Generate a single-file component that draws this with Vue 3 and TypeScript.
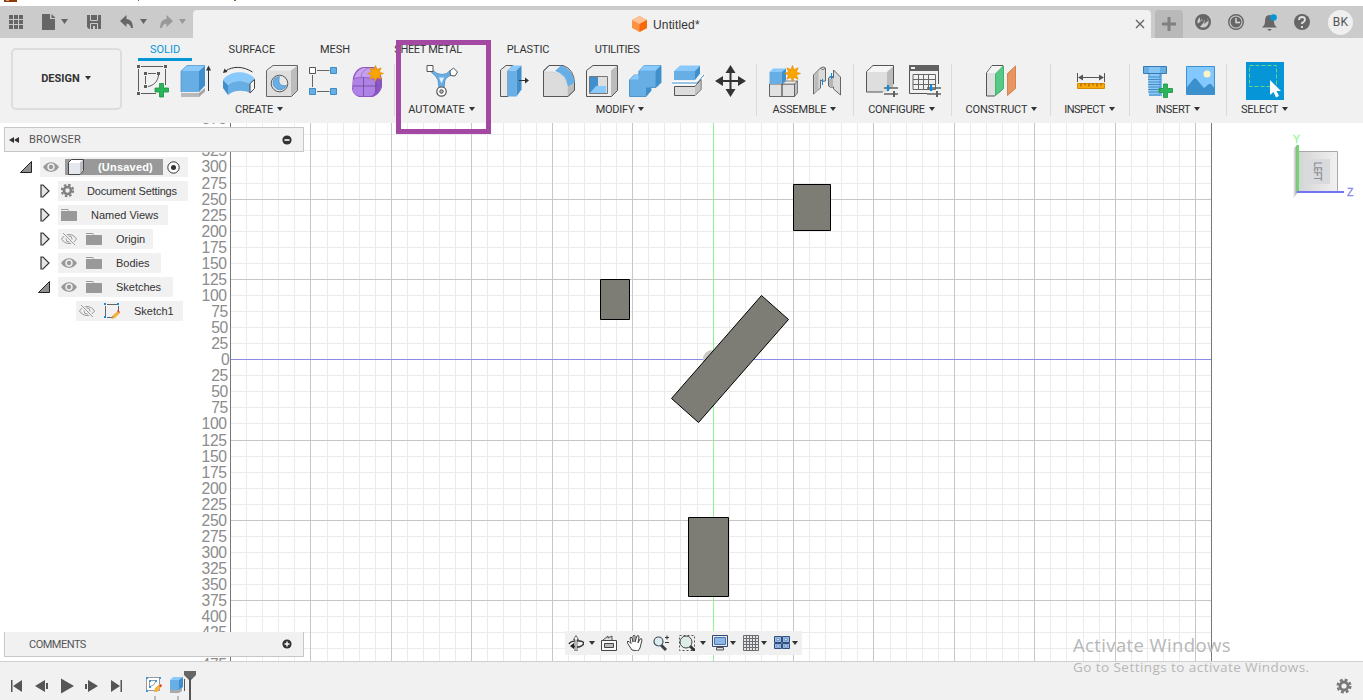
<script setup lang="ts">
interface Group { label: string; tools: string[]; width: number; pad: number; shift: number; track: number }
interface TreeRow { label: string; indent: number; width: number; textAt: number; open: boolean | null; eye: string; icon: string; bold?: boolean }

const tabs = [
  { label: 'SOLID', width: 54, left: 0, track: 0, active: true },
  { label: 'SURFACE', width: 60, left: 30, track: 0.1 },
  { label: 'MESH', width: 40, left: 33, track: 0 },
  { label: 'SHEET METAL', width: 80, left: 33, track: -0.35 },
  { label: 'PLASTIC', width: 60, left: 30, track: -0.1 },
  { label: 'UTILITIES', width: 60, left: 29, track: -0.35 },
]

const groups: Group[] = [
  { label: 'CREATE', tools: ['sketch', 'extrude', 'revolve', 'hole', 'pattern', 'form'], width: 270, pad: 12, shift: -1, track: -0.25 },
  { label: 'AUTOMATE', tools: ['automate'], width: 93, pad: 31, shift: 0, track: -0.1 },
  { label: 'MODIFY', tools: ['press', 'fillet', 'shell', 'combine', 'split', 'move'], width: 269, pad: 12, shift: -2.5, track: -0.25 },
  { label: 'ASSEMBLE', tools: ['component', 'joint'], width: 97, pad: 12, shift: -1, track: -0.15 },
  { label: 'CONFIGURE', tools: ['configure', 'table'], width: 98, pad: 12, shift: -1.5, track: -0.3 },
  { label: 'CONSTRUCT', tools: ['plane'], width: 99, pad: 33, shift: 0, track: -0.15 },
  { label: 'INSPECT', tools: ['measure'], width: 79, pad: 24, shift: -1, track: -0.5 },
  { label: 'INSERT', tools: ['bolt', 'image'], width: 97, pad: 13, shift: -0.5, track: -0.3 },
  { label: 'SELECT', tools: ['select'], width: 76, pad: 19, shift: -0.5, track: -0.25 },
]

const slider = '<path d="M18 23h14M18 29h14" stroke="#616161" stroke-width="1.6"/><path d="M22 20v6" stroke="#0a8ce6" stroke-width="2.2"/><path d="M28 26v6" stroke="#616161" stroke-width="2"/>'
const star = '<path d="M0-8L1.6-3.9 5.7-5.7 3.9-1.6 8 0 3.9 1.6 5.7 5.7 1.6 3.9 0 8-1.6 3.9-5.7 5.7-3.9 1.6-8 0-3.9-1.6-5.7-5.7-1.6-3.9Z" fill="#f9a500" stroke="#e08a00" stroke-width=".6"/>'
const plus = '<path d="M22.5 18.5h4v4.500h5v4h-5v5h-4v-5h-4.500v-4h4.500Z" fill="#2bb45a" stroke="#149440" stroke-width=".8"/>'

const icons: Record<string, string> = {
  sketch: `<path d="M4 1.5h22M1.5 4v22M28.5 4v16M4 28.5h15M11 8.500h8M8.500 11v8M21.500 10C21 16 17 20.500 11 21.500" fill="none" stroke="#5c5c5c"/><path d="M0 0h3v3H0zM27 0h3v3h-3zM0 27h3v3H0zM7 7h3v3H7zM20 7h3v3h-3zM7 20h3v3H7z" fill="#5c5c5c"/>${plus}`,
  extrude: '<path d="M1 28h18l6-5v3.500L19 32H1z" fill="#a4a4a4"/><path d="M1 28h18v4H1z" fill="#b9b9b9"/><path d="M1 6h18v21H1z" fill="#67aee5"/><path d="M1 6L7 .5h18L19 6z" fill="#8ac9fb"/><path d="M19 6L25 .5v20L19 27z" fill="#3f8fcd"/><path d="M1 27V6L7 .5h18" stroke="#478ec9" stroke-width=".7" fill="none"/><path d="M28.500 2v24" stroke="#333"/><path d="M28.500 .5l2.500 5h-5z" fill="#333"/>',
  revolve: '<path d="M2.500 6C10 1 20 1 29.500 7" fill="none" stroke="#333"/><path d="M0 8l1.500-4.500 3 3.500z" fill="#333"/><path d="M0 15C7 5 25 5 32 14l-5 5C22 15 10 15 5 20z" fill="#8ac9fb"/><path d="M5 20C10 15 22 15 27 19v9C21 24.500 10 25 5 30z" fill="#67aee5"/><path d="M0 15l5 5v10l-5-7z" fill="#3f8fcd"/><path d="M27 18.500l4.500-4v9L27 28z" fill="#f7f7f7" stroke="#444"/>',
  hole: '<path d="M.5 5.500L7 .5h24.500L25.500 5.500z" fill="#eee"/><path d="M25 5.500L31.500 .5v25L25 31.500z" fill="#bcbcbc"/><path d="M.5 5.500H25v26H.5z" fill="#dedede"/><path d="M.5 5.500L7 .5h24.500v25L25.500 31.500H.5z" fill="none" stroke="#666"/><circle cx="13.500" cy="18.500" r="8.300" fill="#e7e7e7" stroke="#555"/><path d="M8.500 13.500A7 7 0 1 0 20.500 20.500C13 22 12 16 13.500 11.700A7 7 0 0 0 8.500 13.500" fill="#67aee5" stroke="#488ac0" stroke-width=".7"/>',
  pattern: '<path d="M8 5.500h12.500M8 26.500h12.500M3.500 10v12" stroke="#666"/><path d="M.5 2.500h6v6h-6z" fill="white" stroke="#555"/><path d="M21.500 2.500h6v6h-6zM.5 23.500h6v6h-6zM21.500 23.500h6v6h-6z" fill="#67aee5" stroke="#3d8dc9"/>',
  form: `<path d="M1 12Q4 3 11 2h12Q27 3 30 14v8Q28 29 21 32H7Q1 30 0 24z" fill="#8c57c5"/><path d="M2 14Q4 5 11 3h10Q26 4 28 10l-6 5z" fill="#c7a0f0"/><path d="M1 15Q4 11 12 12 21 11 23 15v11Q22 31 18 31H8Q1 30 1 25z" fill="#af82e8"/><path d="M1 21h23M11.500 12v19M24 14v13" fill="none" stroke="#6e4a94" stroke-width=".8"/><path d="M1.500 14Q11 10 23 15M24 21l6-3M9 12Q10 5 17 3" fill="none" stroke="#7b55a4" stroke-width=".5"/><g transform="translate(23.500 8.500)">${star}</g>`,
  automate: '<path d="M6 5Q11 9.500 16 9.500 21 9.500 24 5.500l1.500 4.500Q20 12 19 15l-1 8h-5l-1-8Q10.500 11 5.500 7.500z" fill="#67aee5" stroke="#3883ba" stroke-width=".7"/><path d="M13 12.500h5l-2.500 6z" fill="#e6eff5"/><path d="M1 .5h6v6H1zM27.500 3l4 4-2.500 4-4.500-.5-.5-4.500z" fill="#fff" stroke="#555"/><circle cx="15.500" cy="26.500" r="4.700" fill="#fff" stroke="#555" stroke-width="1.200"/><circle cx="15.500" cy="26.500" r="1.800" fill="#aaa" stroke="#555"/>',
  press: '<path d="M.5 5L6 .5h7L8 6v25.500H.5z" fill="#e7e7e7" stroke="#555"/><path d="M7.500 5.500h9v26h-9z" fill="#67aee5"/><path d="M7.500 5.500l5-5h9l-5 5z" fill="#8ac9fb"/><path d="M16.500 5.500l5-5v24l-5 7z" fill="#3f8fcd"/><path d="M19 15.500h8" stroke="#333"/><path d="M25 12.500l4 3-4 3z" fill="#333"/>',
  fillet: '<path d="M.5 6L6 .5h14Q31 4 31.500 18v7L25 31.500H.5z" fill="#eee" stroke="#555"/><path d="M.5 7h9Q22 8 24.500 23v8.500H.5z" fill="#dcdcdc" stroke="#ccc" stroke-width=".7"/><path d="M12 6L18 .5Q30 4 31.500 18L25 22Q23 9 12 6" fill="#67aee5"/><path d="M25 22l6.500-4v7L25 31.500z" fill="#bdbdbd"/><path d="M.5 31.500V6L6 .5h11M.5 31.500H25l6.500-6.500V18" fill="none" stroke="#555"/>',
  shell: '<path d="M.5 5.500L7 .5h24.500L25.500 5.500z" fill="#eee"/><path d="M25 5.500L31.500 .5v25L25 31.500z" fill="#bcbcbc"/><path d="M.5 5.500H25v26H.5z" fill="#eee"/><path d="M.5 5.500L7 .5h24.500v25L25.500 31.500H.5z" fill="none" stroke="#555"/><path d="M3.500 11.500h18v17h-18z" fill="#dfdfdf" stroke="#777"/><path d="M4 12h8v9l-8 7z" fill="#3f8fcd"/><path d="M4 28l6-7h10v7z" fill="#8ac9fb"/>',
  combine: '<path d="M.5 15L5 10h5V6L15 .5h17v17l-5 5h-5v3l-5 6H.5z" fill="#67aee5" stroke="#3887c3" stroke-width=".8"/><path d="M.5 15L5 10h5V6L15 .5h17l-5.500 5.500H10v9z" fill="#8ac9fb"/><path d="M26.500 6L32 .5v17l-5.500 5zM17 22.500h5v3l-5 6z" fill="#3f8fcd"/><path d="M.5 15H10V6h16.500" stroke="#67aee5" fill="none"/>',
  split: '<path d="M2 6L8 .5h20L23 6z" fill="#8ac9fb"/><path d="M2 6h21v9H2z" fill="#67aee5"/><path d="M23 6L28 .5v8L23 15z" fill="#3f8fcd"/><path d="M0 18h25l7-8" fill="none" stroke="#fff" stroke-width="4"/><path d="M0 18h25l7-8" fill="none" stroke="#398bc8"/><path d="M2.500 21.500H23l6-7v10L23 30.500H2.500z" fill="#ddd" stroke="#555"/><path d="M23 22l5.500-6v8L23 30z" fill="#c2c2c2"/>',
  move: '<path d="M15.500 3v26M3 16h26" stroke="#333" stroke-width="2"/><path d="M15.500 0l5 8h-10zM15.500 32l5-8h-10zM0 16l8-5v10zM31 16l-8-5v10z" fill="#333"/>',
  component: `<path d="M.5 19h12.500v12.500H.5zM13 19h12.500v12.500H13z" fill="#e1e1e1" stroke="#666"/><path d="M13 19l4-3h12l-3 3z" fill="#eee" stroke="#555" stroke-width=".7"/><path d="M25.500 19l3-3v12l-3 3.500z" fill="#bcbcbc" stroke="#555" stroke-width=".7"/><path d="M.5 7h12v12H.5z" fill="#67aee5"/><path d="M.5 7L4 3.500h13L12.500 7z" fill="#8ac9fb"/><path d="M12.500 7L17 3.500v12L12.500 19z" fill="#3f8fcd"/><g transform="translate(23.500 8.500)">${star}</g>`,
  joint: '<path d="M1.500 10L8.500 3q3-2 5 0v13q-3 1-5-1v8l-7 6z" fill="#dadada" stroke="#666"/><path d="M2.500 10.500l4-4.500v19l-4 3.500z" fill="#bbb"/><path d="M16.500 13q2-2 5 0V5l7 7v18l-7-6v-2q-3 1-5-1z" fill="#dadada" stroke="#666"/><path d="M17 13.500q2 1 4 0v8q-2 .5-4-1z" fill="#b5b5b5"/><path d="M8.500 3.500q2 2 5 0" fill="#fff" stroke="#666"/><path d="M10.500 14v6M19.500 8v6M17.500 11.500h4" stroke="#0a8ce6"/>',
  configure: `<path d="M.5 6L7 .5h21v20L22 27H.5z" fill="#f5f5f5"/><path d="M.5 7H21v20H.5z" fill="#dedede"/><path d="M21 7l6.500-6v20L21 27z" fill="#bbb"/><path d="M27.500 19V.5H7L.5 6.500V27H17" fill="none" stroke="#555"/>${slider}`,
  table: `<path d="M0 0h30v6H0z" fill="#616161"/><path d="M.5 6v22.500H18M29.500 6v13" stroke="#555" fill="none"/><path d="M2 2h4v2H2z" fill="#eee"/><path d="M4 9.500h22.500v15H4zM4 14.500h22.500M4 19.500h22.500M9.500 10v14M14.500 10v14M19.500 10v14" fill="none" stroke="#666"/>${slider}`,
  plane: '<path d="M1.500 8L7 .5h11V24l-8.500 7H1.500z" fill="#e0e0e0" stroke="#555"/><path d="M2 8h8L17 1H7z" fill="#f4f4f4"/><path d="M10.500 9l8-8v22.500l-8 7z" fill="#57c986" stroke="#43b372"/><path d="M22.500 8.500l8-7.500v22.500l-8 7z" fill="#e79662" stroke="#d7834c"/>',
  measure: '<path d="M2.500 8v9M29.500 8v9M4 12.500h24" stroke="#555"/><path d="M3 12.500l5-3v6zM29 12.500l-5-3v6z" fill="#555"/><path d="M2.500 18.500h27v5h-27z" fill="#fba80a" stroke="#d38a07"/><path d="M6 18.500v3M10 18.500v2M14 18.500v3M18 18.500v2M22 18.500v3M26 18.500v2" stroke="#7c5511"/>',
  bolt: `<path d="M.5 1.500h23v7H.5z" fill="#67aee5" stroke="#347ab3"/><path d="M6 2h11v6H6z" fill="#86c4f4"/><path d="M6 9h12v2H6zM5 11h14v20H6z" fill="#8ac9fb"/><path d="M6 9v2M18 9v2M5 12h13M5 14.500h13M5 17h13M5 19.500h13M5 22h13M5 24.500h13M5 27h13M6 30h11" stroke="#4689bb"/><path d="M16 9h2.500v22H16z" fill="#4a96d2" opacity=".5"/><g transform="translate(-2 .5)">${plus}</g>`,
  image: '<path d="M.5 1.500h28v28H.5z" fill="#83c9ff" stroke="#3f91cd"/><circle cx="21" cy="9" r="3.500" fill="#fff4c6"/><path d="M1 22L8 13.500h2L18 23l5-4h2l4 5v5.500H1z" fill="#3b91cd"/>',
  select: '<path d="M0 0h38v38H0z" fill="#0696d7"/><path d="M3.500 3.500h27v21h-27z" fill="none" stroke="#67d582" stroke-dasharray="4 2"/><path d="M24 18v15l3.500-3 2.500 5.500 3-1.500-2.500-5h4.500z" fill="#fff"/>',
}

const treeIcons: Record<string, string> = {
  eye: '<path d="M0 8C4 1.500 12 1.500 16 8 12 14.500 4 14.500 0 8z" fill="#999"/><circle cx="8" cy="8" r="3.700" fill="#eee"/><circle cx="8" cy="8" r="2.200" fill="#999"/>',
  off: '<path d="M.5 8C4 2 12 2 15.500 8 12 14 4 14 .5 8z" fill="none" stroke="#999"/><circle cx="8" cy="8" r="3" fill="none" stroke="#999"/><path d="M2 2l12 12" stroke="#f1f1f1" stroke-width="3"/><path d="M2 2l12 12" stroke="#999"/>',
  folder: '<path d="M0 2h7l1 2h8v10H0z" fill="#999"/><path d="M0 3.500h7" stroke="#f1f1f1"/>',
  gear: '<g fill="none" stroke="#808080"><circle cx="6.500" cy="7.500" r="3.500" stroke-width="2.600"/><circle cx="6.500" cy="7.500" r="5.700" stroke-width="2" stroke-dasharray="2.500 1.976"/></g>',
  cube: '<path d="M.5 3.500l3-3h12v11l-3.500 4H.5z" fill="#fff" stroke="#444"/><path d="M12 3.500L15 1v10l-3 4z" fill="#bbbec5"/><path d="M1 4h11v11H1z" fill="#e4e7ed"/>',
  sk: '<path d="M3 1.500h10M1.500 3v10M3 14.500h5M14.500 3v5" stroke="#666"/><path d="M0 0h2v2H0zM13 0h2v2h-2zM0 13h2v2H0zM8 13h2v2H8z" fill="#0a8ce6"/><path d="M8 16l1-4 5-4 2 2-5 5z" fill="#f7b13b"/><path d="M13 8l1-1 2 2-1 1z" fill="#e43e3e"/>',
}

const rows: TreeRow[] = [
  { label: '(Unsaved)', indent: 40, width: 148, textAt: 98, open: true, eye: 'eye', icon: 'cube', bold: true },
  { label: 'Document Settings', indent: 58, width: 130, textAt: 87, open: false, eye: '', icon: 'gear' },
  { label: 'Named Views', indent: 58, width: 110, textAt: 91, open: false, eye: '', icon: 'folder' },
  { label: 'Origin', indent: 58, width: 95, textAt: 116, open: false, eye: 'off', icon: 'folder' },
  { label: 'Bodies', indent: 58, width: 103, textAt: 116, open: false, eye: 'eye', icon: 'folder' },
  { label: 'Sketches', indent: 58, width: 115, textAt: 116, open: true, eye: 'eye', icon: 'folder' },
  { label: 'Sketch1', indent: 76, width: 107, textAt: 134, open: null, eye: 'off', icon: 'sk' },
]

const step = 16.085
const top = 123
const columns = Array.from({ length: 62 }, (_, k) => k - 30).map(i => ({ i, at: Math.floor(713.1 + i * step) + 0.5 }))
const lines = Array.from({ length: 35 }, (_, k) => k - 15).map(i => ({ i, at: Math.floor(359.7 + i * 16.06) + 0.5 - top }))
const labelEnd = (i: number) => (i === 0 ? 229.5 : Math.abs(i) < 4 ? 228 : 226.8)
const lineColor = (i: number, axis: string) => (i === 0 ? axis : i % 5 === 0 ? '#c6c6c6' : '#ebebeb')

const nav: { id: string; menu: boolean; before: number; gap: number; svg: string }[] = [
  { id: 'orbit', menu: true, before: 5, gap: 6, svg: '<path d="M1 9c2-4 13-4 15-1-1 4-7 5-11 3" fill="none" stroke="#333" stroke-width="1.500"/><path d="M7 4.500H5.500l2.500-4 2.500 4H9V16H7z" fill="#fff" stroke="#444" stroke-width=".8"/><path d="M2 11l4-3v6z" fill="#222"/>' },
  { id: 'look', menu: false, before: 0, gap: 10, svg: '<path d="M2 5l5-4v2l4-2v4" fill="#ddd" stroke="#555"/><path d="M.5 5.500h15v10H.5z" fill="#f9f9f9" stroke="#454545"/><path d="M3.500 8.500h9v4h-9z" fill="#b8bbc0" stroke="#444"/>' },
  { id: 'pan', menu: false, before: 0, gap: 10, svg: '<path d="M5 15L1 9 0 6.500q2-1 4 2L3 3q1-2 2 0l1 4V1q1.500-2 2 0v6L10 1q2-1 2 1l-1 6 2-4q2-1 2 1l-2 8-2 3z" fill="#fff" stroke="#454545"/>' },
  { id: 'zoom', menu: false, before: 0, gap: 10, svg: '<path d="M8 10l5 5" stroke="#3c434c" stroke-width="3"/><circle cx="5.500" cy="6.500" r="4.500" fill="#dcecf1" stroke="#3d4d57" stroke-width="1.200"/><path d="M12 2.500h4M14 .5v4M12 7.500h4" stroke="#333"/>' },
  { id: 'fit', menu: true, before: 5, gap: 6, svg: '<path d="M.5 .5h15v15H.5z" fill="none" stroke="#555" stroke-dasharray="2 2"/><path d="M11 11l5 5" stroke="#333" stroke-width="3"/><circle cx="7" cy="7" r="6" fill="#dcece9" stroke="#454545"/>' },
  { id: 'display', menu: true, before: 2, gap: 7, svg: '<path d="M.5 .5h15v11H.5z" fill="#eee" stroke="#334568"/><path d="M2.500 2.500h11v7h-11z" fill="#8eb6e1" stroke="#4776b4"/><path d="M4.500 12.500h7v2.500h-7z" fill="#ddd" stroke="#555"/>' },
  { id: 'snap', menu: true, before: 2, gap: 7, svg: '<path d="M.5 .5h15v15H.5zM3.500 0v16M6.500 0v16M9.500 0v16M12.500 0v16M0 3.500h16M0 6.500h16M0 9.500h16M0 12.500h16" fill="#e5e5e5" stroke="#6a6d72"/>' },
  { id: 'views', menu: true, before: 2, gap: 0, svg: '<path d="M.5 1.500h7v6h-7zM8.500 1.500h7v6h-7zM.5 8.500h7v5h-7zM8.500 8.500h7v5h-7z" fill="#9ab9e0" stroke="#304d80"/><path d="M2.500 3.500h3v2h-3zM10.500 3.500h3v2h-3zM2.500 10h3v2h-3zM10.500 10h3v2h-3z" fill="#c5d9ef" stroke="#5b83ba" stroke-width=".6"/>' },
]

const play = [
  { id: 'start', d: 'M1 2h1.500v12H1zM12 2v12L3 8z' },
  { id: 'back', d: 'M10 2v12L0 8zM11 5h2v6h-2z' },
  { id: 'play', d: 'M1 .5l13 7.500-13 7.500z' },
  { id: 'forward', d: 'M0 6h2v5H0zM3 2l10 6-10 6z' },
  { id: 'end', d: 'M1 2l9 6-9 6zM10.500 2H12v12h-1.500z' },
]
</script>

<template>
  <div class="app">
    <div class="caption">
      <svg width="260" height="6"><path d="M4 0h13v2H4z" fill="#8b3a0c" /><path d="M6 0h3v1H6z" fill="#d9a27e" /><path d="M138 0h1v1h-1z" fill="#2a69a8" /><path d="M234 0h2v1h-2z" fill="#80602f" /></svg>
    </div>

    <header class="topbar">
      <div class="quick">
        <svg width="193" height="32" fill="#666">
          <path d="M9 9h4v4H9zM14 9h4v4h-4zM19 9h4v4h-4zM9 14h4v4H9zM14 14h4v4h-4zM19 14h4v4h-4zM9 19h4v4H9zM14 19h4v4h-4zM19 19h4v4h-4z" />
          <path d="M42 8h8v5h5v11H42zM51.500 8l4 4h-4zM61 13h7l-3.500 5zM140 13h7l-3.500 5z" />
          <path d="M87 9h14v14H89l-2-2z" /><path d="M90.500 9v5.500h7V9M90.500 23v-5.500h7V23" fill="none" stroke="#cbcbcb" /><path d="M93 20h2v3h-2z" fill="#cbcbcb" />
          <path d="M120 15l6.500-6v4q6.500.5 6.500 9h-2q-.5-4-4.500-4.500V21z" />
          <g opacity=".5"><path d="M173 15l-6.500-6v4q-6.500.5-6.500 9h2q.5-4 4.500-4.500V21zM179 13h7l-3.500 5z" /></g>
        </svg>
      </div>
      <div class="doctab">
        <div class="doctitle">
          <svg width="15" height="16" viewBox="0 0 15 16"><path d="M7.500 0L15 4v8l-7.500 4L0 12V4z" fill="#ff9142" /><path d="M7.500 0L15 4 7.500 8 0 4z" fill="#ffc194" /><path d="M15 4v8l-7.500 4V8z" fill="#f96a08" /></svg>
          <span>Untitled*</span>
        </div>
        <svg class="close" width="10" height="10"><path d="M1 1l8 8M9 1L1 9" stroke="#666" stroke-width="1.400" /></svg>
      </div>
      <div class="newtab"><svg width="14" height="14"><path d="M5.500 0h3v5.500H14v3H8.500V14h-3V8.500H0v-3h5.500z" fill="#808080" /></svg></div>
      <div class="account">
        <svg width="126" height="28" fill="#666">
          <circle cx="8" cy="12" r="6.800" fill="none" stroke="#666" stroke-width="2.400" /><path d="M1.500 14q3-1 5.500-4l2 2-5 6z" /><path d="M5 7q3-3 7-1l1 5-4 3 1-4-2 2-1-3-2 2z" />
          <circle cx="41" cy="12" r="7.300" fill="none" stroke="#666" stroke-width="1.400" /><circle cx="41" cy="12" r="5.500" /><path d="M41 8v4.500h4" stroke="#ddd" stroke-width="1.400" fill="none" />
          <path d="M67 17.500q3.500-2.500 3-6.500 0-6 4.500-6t4.500 6q-.5 4 3 6.500zM72 19h5l-2.500 2z" /><circle cx="78.500" cy="7.500" r="3.300" fill="#0696d7" />
          <circle cx="107" cy="12" r="8" /><path d="M104 10q0-3 3-3t3 2.500q0 2-3 3.500v1M107 16v2" stroke="#e0e0e0" stroke-width="1.800" fill="none" />
        </svg>
        <div class="avatar">BK</div>
      </div>
    </header>

    <section class="ribbon">
      <button class="design">DESIGN<i class="caret"></i></button>
      <div class="ribbon-main">
        <nav class="tabs">
          <div v-for="t in tabs" :key="t.label" class="tab" :class="{ active: t.active }" :style="{ width: t.width + 'px', marginLeft: t.left + 'px', letterSpacing: t.track + 'px' }">{{ t.label }}</div>
        </nav>
        <div class="groups">
          <div v-for="g in groups" :key="g.label" class="group" :style="{ width: g.width + 'px' }">
            <div class="tools" :style="{ paddingLeft: g.pad + 'px' }">
              <svg v-for="t in g.tools" :key="t" :class="['tool', { big: t === 'select' }]" fill="none" v-html="icons[t]"></svg>
            </div>
            <div class="label" :style="{ paddingRight: -g.shift * 2 + 'px', letterSpacing: g.track + 'px' }">{{ g.label }}<i class="caret"></i></div>
          </div>
        </div>
      </div>
    </section>

    <main class="canvas">
      <svg class="grid" width="1363" height="538">
        <g v-for="c in columns" :key="'c' + c.i"><path v-if="c.i % 5" :d="`M${c.at} 0V538`" stroke="#ebebeb" /></g>
        <g v-for="l in lines" :key="'l' + l.i"><path v-if="l.i % 5" :d="`M231 ${l.at}H1211`" stroke="#ebebeb" /></g>
        <g v-for="c in columns" :key="'m' + c.i"><path v-if="c.i % 5 === 0" :d="`M${c.at} 0V538`" :stroke="lineColor(c.i, '#8ff58f')" /></g>
        <g v-for="l in lines" :key="'n' + l.i"><path v-if="l.i % 5 === 0" :d="`M231 ${l.at}H1211`" :stroke="lineColor(l.i, '#8c8ce8')" /></g>
        <path d="M230.500 0V538M1211.500 0V538" stroke="#777" />
        <text v-for="l in lines" :key="'t' + l.i" class="scale" :x="labelEnd(l.i)" :y="l.at + 5.4" text-anchor="end">{{ Math.abs(l.i * 25) }}</text>
        <circle cx="712" cy="236" r="9" fill="#c8c8c8" />
        <g fill="#7e7d75" stroke="#000">
          <path d="M600.500 156.500h29v40h-29zM793.500 61.500h37v46h-37zM688.500 394.500h40v79h-40z" />
          <path d="M761.500 172.500L788.500 196.500 698.500 299.500 671.500 275.500z" />
        </g>
      </svg>

      <svg class="cube" width="73" height="80">
        <defs>
          <linearGradient id="face"><stop offset="0" stop-color="#d4d4d4" /><stop offset="1" stop-color="#f1f1f1" /></linearGradient>
          <linearGradient id="shade"><stop offset="0" stop-color="#fff" /><stop offset="1" stop-color="#9b9b9b" /></linearGradient>
        </defs>
        <path d="M3 19l4-4v48l-4 6z" fill="url(#shade)" />
        <path d="M8.500 21.500h39v40h-39z" fill="url(#face)" stroke="#a9a9a9" />
        <path d="M15 29h25v25H15z" fill="#d9dade" />
        <path d="M8 15v47" stroke="#5ce65c" stroke-width="2" /><path d="M7 62h47" stroke="#7373f5" stroke-width="2" />
        <text x="3" y="13" class="axis" fill="#99f599" stroke="#99f599" stroke-width=".3">Y</text><text x="57" y="66" class="axis" fill="#8484f2" stroke="#8484f2" stroke-width=".3">Z</text>
        <text class="face" transform="translate(24 32) rotate(90)" textLength="19" lengthAdjust="spacingAndGlyphs">LEFT</text>
      </svg>

      <div class="panel browser">
        <svg width="10" height="8"><path d="M5 1v6L0 4zM10 1v6L5 4z" fill="#333" /></svg>
        <span>BROWSER</span>
        <svg class="round" width="10" height="10"><circle cx="5" cy="5" r="4.600" fill="#333" /><path d="M2.500 5h5" stroke="#fff" stroke-width="1.600" /></svg>
      </div>

      <div class="tree">
        <div v-for="r in rows" :key="r.label" class="row">
          <div class="twisty" :style="{ width: r.indent + 'px' }">
            <svg v-if="r.open === true" width="12" height="12"><path d="M11.500 .5v11H.5z" fill="#909090" stroke="#222" /></svg>
            <svg v-else-if="r.open === false" width="10" height="14"><path d="M1 1h2l6 6-6 6H1z" fill="#e5e5e5" stroke="#333" stroke-width="1.200" /></svg>
          </div>
          <div class="item" :class="{ root: r.bold }" :style="{ width: r.width + 'px' }">
            <svg v-if="r.eye" class="eye" width="16" height="16" v-html="treeIcons[r.eye]"></svg>
            <div v-if="r.bold" class="selected"><svg width="16" height="16" v-html="treeIcons.cube"></svg><b>(Unsaved)</b></div>
            <svg v-if="r.bold" width="13" height="13"><circle cx="6.500" cy="6.500" r="5.700" fill="#fff" stroke="#333" /><circle cx="6.500" cy="6.500" r="2.500" fill="#333" /></svg>
            <template v-else>
              <div class="glyph" :style="{ width: r.textAt - r.indent - (r.eye ? 28 : 3) + 'px' }"><svg width="16" height="16" v-html="treeIcons[r.icon]"></svg></div>
              <span :class="{ wide: r.label === 'Document Settings' }">{{ r.label }}</span>
            </template>
          </div>
        </div>
      </div>

      <div class="panel comments">
        <span>COMMENTS</span>
        <svg class="round" width="10" height="10"><circle cx="5" cy="5" r="4.600" fill="#333" /><path d="M2.500 5h5M5 2.500v5" stroke="#fff" stroke-width="1.400" /></svg>
      </div>

      <div class="navbar">
        <div v-for="n in nav" :key="n.id" class="navitem" :style="{ marginRight: n.gap + 'px' }">
          <svg width="16" height="16" fill="none" v-html="n.svg"></svg><i v-if="n.menu" class="caret" :style="{ marginLeft: n.before + 'px' }"></i>
        </div>
      </div>
    </main>

    <footer class="timeline">
      <div class="playback"><svg v-for="p in play" :key="p.id" width="14" height="16"><path :d="p.d" fill="#555" /></svg></div>
      <div class="features">
        <svg width="66" height="38">
          <g transform="translate(1 15)"><path d="M.5 .5h13v13H.5z" fill="#fff" stroke="#999" /><path d="M3.500 3.500h6q0 5-6 6z" fill="none" stroke="#999" /><path d="M0 0h2v2H0zM13 0h2v2h-2zM0 13h2v2H0zM3 3h2v2H3zM9 3h2v2H9zM3 9h2v2H3z" fill="#3c99dc" /><path d="M8 15l1-4 5-4 2 2-5 6z" fill="#f5b23e" /><path d="M13 9l2-2 1 2-2 1z" fill="#e33" /></g>
          <path d="M25 28h9l3-2v3l-3 2h-9z" fill="#aaa" /><path d="M25 18l3-3h10l-3 3z" fill="#8ac9fb" /><path d="M25 18h9v10h-9z" fill="#67aee5" /><path d="M34 18l4-3v10l-4 3z" fill="#3f8fcd" /><path d="M39.500 17v12" stroke="#555" />
          <path d="M10 34v4M33 34v4" stroke="#bbb" stroke-width="2" />
          <path d="M39 9h12v4l-5 5h-2l-5-5z" fill="#666" /><path d="M45 16v22" stroke="#555" stroke-width="2" />
        </svg>
      </div>
      <svg class="settings" width="16" height="16"><g fill="none" stroke="#777"><circle cx="8" cy="8" r="4" stroke-width="2.800" /><circle cx="8" cy="8" r="6.300" stroke-width="2.400" stroke-dasharray="2.800 2.148" /></g></svg>
    </footer>

    <div class="highlight"></div>
    <div class="watermark"><div class="w1">Activate Windows</div><div class="w2">Go to Settings to activate Windows.</div></div>
  </div>
</template>

<style>
body { margin: 0; overflow: hidden; }
</style>

<style scoped>
.app { position: relative; width: 1363px; height: 700px; display: flex; flex-direction: column; background: #fff; overflow: hidden; font-family: Roboto, "Liberation Sans", sans-serif; color: #333; }
svg { display: block; flex: none; }
.caption { height: 6px; }
.topbar { height: 32px; display: flex; align-items: flex-end; background: #cbcbcb; }
.quick { width: 193px; height: 32px; }
.doctab { width: 958px; height: 28px; background: #f1f1f1; border-radius: 4px 4px 0 0; display: flex; align-items: center; justify-content: space-between; box-sizing: border-box; padding: 0 6px 0 439px; }
.doctitle { display: flex; align-items: center; gap: 6px; font: 12px "Liberation Sans", sans-serif; letter-spacing: .15px; }
.doctitle span { padding-top: 2px; }
.newtab { width: 28px; height: 28px; margin-left: 4px; background: #b9b9b9; border-radius: 4px 4px 0 0; display: flex; align-items: center; justify-content: center; }
.account { display: flex; margin-left: 12px; height: 28px; }
.avatar { width: 25px; height: 25px; margin-left: 7px; border-radius: 50%; background: #efefef; font-size: 12px; line-height: 25px; text-align: center; color: #555; letter-spacing: .3px; }
.ribbon { height: 85px; flex: none; background: #f1f1f1; display: flex; }
.design { width: 111px; height: 62px; margin: 10px 2px 0 11px; border: 2px solid #ddd; border-radius: 5px; background: #f1f1f1; font: bold 11px Roboto, sans-serif; color: #333; padding: 0 1px 2px 0; display: flex; align-items: center; justify-content: center; }
.caret { display: inline-block; width: 0; height: 0; border: 3px solid transparent; border-top: 4px solid #333; border-bottom: 0; margin-left: 4px; }
.design .caret { margin-left: 5px; }
.ribbon-main { flex: 1; }
.tabs { height: 23px; display: flex; padding-left: 14px; }
.tab { height: 20px; line-height: 24px; font-size: 11px; text-align: center; white-space: nowrap; border-bottom: 3px solid transparent; }
.tab.active { color: #0696d7; border-bottom-color: #0696d7; }
.groups { display: flex; padding-left: 1px; }
.group { position: relative; height: 59px; box-sizing: border-box; }
.group::after { content: ""; position: absolute; right: 0; top: 3px; width: 1px; height: 52px; background: #dadada; }
.group:last-child::after { display: none; }
.tools { display: flex; gap: 11px; height: 42px; box-sizing: border-box; padding-top: 4px; }
.tool { width: 32px; height: 32px; overflow: visible; }
.tool.big { width: 38px; height: 38px; margin-top: -3px; }
.label { height: 14px; line-height: 14px; font-size: 11px; text-align: center; white-space: nowrap; }
.label .caret { vertical-align: 2px; }
.canvas { position: relative; height: 538px; flex: none; overflow: hidden; }
.grid { position: absolute; left: 0; top: 0; }
.scale { font: 15.700px "Liberation Sans", sans-serif; letter-spacing: -.3px; fill: #8c8c8c; }
.cube { position: absolute; left: 1290px; top: 7px; }
.axis { font: 10.500px "Liberation Sans", sans-serif; }
.face { font: bold 10px "Liberation Sans", sans-serif; fill: #8e9096; }
.panel { position: absolute; left: 4px; width: 300px; height: 25px; box-sizing: border-box; border: 1px solid #c7c7c7; background: #f1f1f1; display: flex; align-items: center; font-size: 11px; color: #555; }
.browser { top: 4px; padding-left: 4px; }
.browser span { margin-left: 10px; letter-spacing: .2px; }
.comments { top: 509px; border-top: 0; padding-left: 24px; }
.comments span { letter-spacing: -.5px; }
.round { margin-left: auto; margin-right: 11px; }
.tree { position: absolute; left: 0; top: 34px; display: flex; flex-direction: column; gap: 4px; font: 11px "Liberation Sans", sans-serif; }
.row { height: 20px; display: flex; }
.twisty { display: flex; align-items: center; justify-content: flex-end; box-sizing: border-box; padding-right: 8px; }
.item { display: flex; align-items: center; background: #f1f1f1; box-sizing: border-box; padding-left: 3px; white-space: nowrap; letter-spacing: -.02px; }
.wide { letter-spacing: -.18px; }
.eye { margin-right: 9px; }
.root .eye { margin-right: 6px; }
.selected { width: 98px; height: 16px; margin-right: 4px; background: #999; color: #fff; display: flex; align-items: center; padding-left: 3px; box-sizing: border-box; gap: 14px; letter-spacing: .2px; }
.navbar { position: absolute; left: 565px; top: 508px; width: 237px; height: 24px; box-sizing: border-box; padding-left: 3px; background: #f0f0f0; display: flex; align-items: center; }
.navitem { display: flex; align-items: center; }
.timeline { height: 39px; box-sizing: border-box; border-top: 1px solid #cfcfcf; background: #f1f1f1; display: flex; }
.playback { display: flex; gap: 11px; padding: 16px 0 0 10px; width: 135px; }
.features { width: 66px; }
.settings { margin: 16px 11px 0 auto; }
.highlight { position: absolute; left: 396px; top: 40px; width: 95px; height: 94px; box-sizing: border-box; border: 5px solid #a349a4; }
.watermark { position: absolute; left: 1073px; top: 634px; color: #b7b7b7; font-family: "Open Sans", "Noto Sans", sans-serif; white-space: nowrap; }
.w1 { font-size: 18.500px; line-height: 22px; letter-spacing: .38px; }
.w2 { font-size: 13.500px; line-height: 23px; letter-spacing: .44px; }
</style>
